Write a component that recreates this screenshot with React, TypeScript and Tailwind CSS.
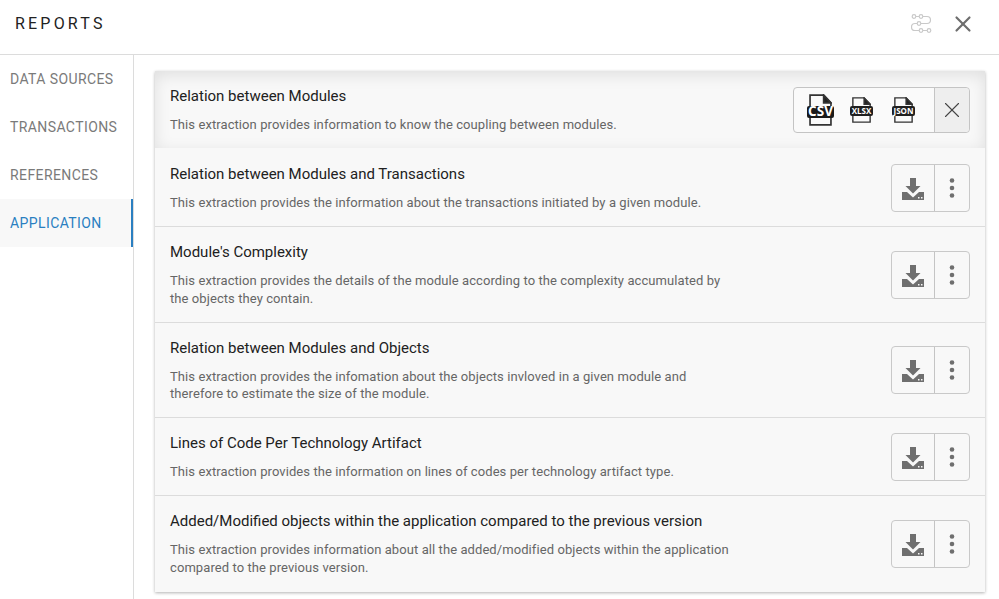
import { X } from 'lucide-react';

const navItems = ['DATA SOURCES', 'TRANSACTIONS', 'REFERENCES', 'APPLICATION'];

const reports = [
  {
    title: 'Relation between Modules',
    desc: ['This extraction provides information to know the coupling between modules.'],
    open: true,
  },
  {
    title: 'Relation between Modules and Transactions',
    desc: ['This extraction provides the information about the transactions initiated by a given module.'],
  },
  {
    title: "Module's Complexity",
    desc: [
      'This extraction provides the details of the module according to the complexity accumulated by',
      'the objects they contain.',
    ],
  },
  {
    title: 'Relation between Modules and Objects',
    desc: [
      'This extraction provides the infomation about the objects invloved in a given module and',
      'therefore to estimate the size of the module.',
    ],
  },
  {
    title: 'Lines of Code Per Technology Artifact',
    desc: ['This extraction provides the information on lines of codes per technology artifact type.'],
  },
  {
    title: 'Added/Modified objects within the application compared to the previous version',
    desc: [
      'This extraction provides information about all the added/modified objects within the application',
      'compared to the previous version.',
    ],
  },
];

const FlowIcon = () => (
  <svg width="22" height="22" viewBox="0 0 22 22" fill="none" stroke="#c9c9c9" strokeWidth="1.2">
    <circle cx="3" cy="3.500" r="1.800" />
    <circle cx="10" cy="3.500" r="1.800" />
    <circle cx="8" cy="10.500" r="1.800" />
    <circle cx="10" cy="17.500" r="1.800" />
    <circle cx="18" cy="17.500" r="1.800" />
    <path d="M5 3.500h3M12 3.500h4a3.500 3.500 0 0 1 0 7H10M6 10.500H4a3.500 3.500 0 0 0 0 7h4M12 17.500h4" />
  </svg>
);

const DownloadIcon = () => (
  <svg width="24" height="24" viewBox="0 0 24 24" fill="#6f6f6f">
    <path d="M9 1h6v8h4.500L12 16.500 4.500 9H9z" />
    <path d="M1 15h5l6 5.500L18 15h5v8H1z" />
    <rect x="17" y="20" width="1.500" height="1.500" fill="#f8f8f8" />
    <rect x="20" y="20" width="1.500" height="1.500" fill="#f8f8f8" />
  </svg>
);

const DotsIcon = () => (
  <svg width="6" height="20" viewBox="0 0 6 20" fill="#6f6f6f">
    <circle cx="3" cy="2.500" r="2.300" />
    <circle cx="3" cy="10" r="2.300" />
    <circle cx="3" cy="17.500" r="2.300" />
  </svg>
);

const FileIcon = ({ label, big }: { label: string; big?: boolean }) => (
  <div className={big ? 'relative flex h-[32px] w-[27px] justify-center' : 'relative flex h-[26px] w-[23px] justify-center'}>
    <svg width={big ? 23 : 19} height={big ? 32 : 26} viewBox="0 0 22 29" fill="none" preserveAspectRatio="none" stroke="#333" strokeWidth="1.600">
      <path d="M1 28V1h13l7 7v20z" />
      <path d="M14 1v7h7z" fill="#222" />
    </svg>
    <span
      className={
        big
          ? "absolute left-0 top-[12px] flex h-[12px] w-[27px] items-center justify-center rounded-[2px] bg-[#1a1a1a] font-['Open_Sans',sans-serif] text-[13.500px] leading-none font-bold text-white"
          : "absolute left-0 top-[9px] flex h-[10px] w-[23px] items-center justify-center rounded-[2px] bg-[#1f1f1f] font-['Open_Sans',sans-serif] text-[8px] leading-none font-bold text-white"
      }
    >
      {label}
    </span>
  </div>
);

const Actions = ({ open }: { open?: boolean }) =>
  open ? (
    <div className="flex h-[46px] rounded-[4px] border border-[#c4c4c4] bg-[#fafafa]">
      <div className="flex w-[140px] items-center pl-[13px]">
        <FileIcon label="CSV" big />
        <div className="ml-[16px]">
          <FileIcon label="XLSX" />
        </div>
        <div className="ml-[19px]">
          <FileIcon label="JSON" />
        </div>
      </div>
      <div className="flex w-[35px] items-center justify-center rounded-r-[4px] border-l border-[#c4c4c4] bg-[#eeeeee]">
        <X size={26} strokeWidth={1} color="#444" />
      </div>
    </div>
  ) : (
    <div className="flex h-[48px] rounded-[4px] border border-[#c9c9c9] bg-[#f8f8f8]">
      <div className="flex w-[42px] items-center justify-center pt-[2px]">
        <DownloadIcon />
      </div>
      <div className="flex w-[35px] items-center justify-center border-l border-[#c4c4c4]">
        <DotsIcon />
      </div>
    </div>
  );

export default function App() {
  return (
    <div className="flex h-[599px] w-[999px] flex-col overflow-hidden bg-white font-['Roboto',sans-serif]">
      <header className="flex h-[55px] shrink-0 items-center border-b border-[#dcdcdc] pl-[15px] pr-[23px]">
        <h1 className="pb-[7px] text-[16px] tracking-[3.200px] text-[#222]">REPORTS</h1>
        <div className="ml-auto flex items-center gap-[17px] pb-[6px]">
          <FlowIcon />
          <X size={26} strokeWidth={2} color="#6e6e6e" />
        </div>
      </header>
      <div className="flex min-h-0 flex-1">
        <nav className="w-[134px] shrink-0 border-r border-[#dcdcdc]">
          {navItems.map((item) => (
            <div
              key={item}
              className={
                item === 'APPLICATION'
                  ? 'flex h-[48px] items-center border-r-2 border-[#2a7fc1] bg-[#f8f8f8] pl-[10px] text-[14px] tracking-[0.400px] text-[#2a7fc1]'
                  : 'flex h-[48px] items-center pl-[10px] text-[14px] tracking-[0.400px] text-[#7a7a7a]'
              }
            >
              {item}
            </div>
          ))}
        </nav>
        <main className="min-w-0 flex-1 pl-[21px] pr-[14px] pt-[16px]">
          <div className="shadow-[0_1px_3px_rgba(0,0,0,0.3)]">
            {reports.map((report) => (
              <div
                key={report.title}
                className={
                  report.open
                    ? 'flex items-center border-b border-b-transparent bg-[#f8f8f8] pb-[14px] pl-[15px] pr-[15px] pt-[15px] shadow-[inset_0_4px_16px_rgba(0,0,0,0.1)]'
                    : 'flex items-center border-b border-b-[#dcdcdc] bg-[#f8f8f8] pb-[14px] pl-[15px] pr-[15px] pt-[15px] last:border-b-transparent'
                }
              >
                <div className="min-w-0 pb-[0.500px]">
                  <div className="text-[15px] leading-[20px] text-[#212121]">{report.title}</div>
                  <div className="mt-[10px] text-[13px] leading-[17.500px] tracking-[0.080px] text-[#666]">
                    {report.desc.map((line) => (
                      <div key={line}>{line}</div>
                    ))}
                  </div>
                </div>
                <div className="ml-auto shrink-0">
                  <Actions open={report.open} />
                </div>
              </div>
            ))}
          </div>
        </main>
      </div>
    </div>
  );
}
